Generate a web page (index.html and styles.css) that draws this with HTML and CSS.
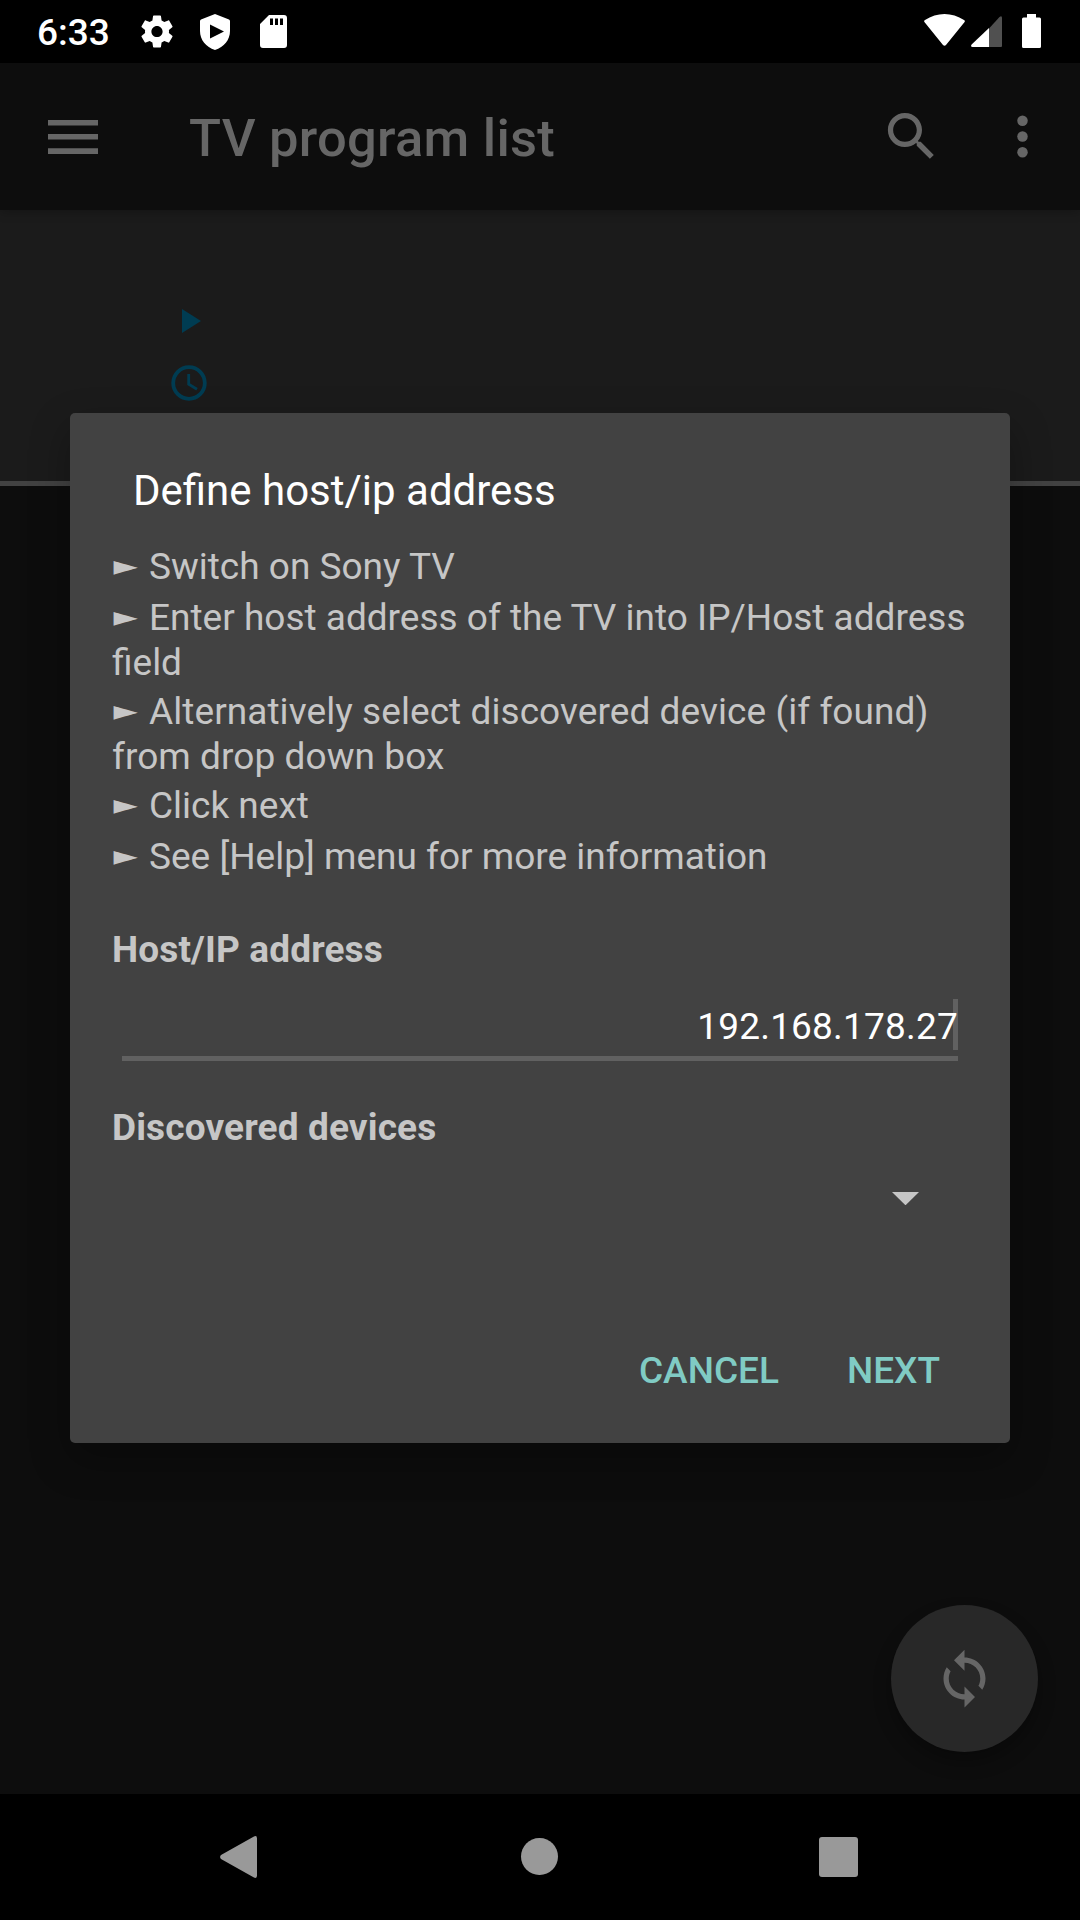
FILE: index.html
```html
<!DOCTYPE html>
<html lang="en">
<head>
<meta charset="utf-8">
<title>TV program list</title>
<link rel="stylesheet" href="styles.css">
</head>
<body>
<div class="screen">
  <header class="status">
    <span class="time">6:33</span>
    <svg class="gear" viewBox="2 2 20 20"><path d="M19.43 12.98c.04-.32.07-.64.07-.98s-.03-.66-.07-.98l2.11-1.65c.19-.15.24-.42.12-.64l-2-3.46c-.12-.22-.39-.3-.61-.22l-2.49 1c-.52-.4-1.08-.73-1.69-.98l-.38-2.65C14.46 2.18 14.25 2 14 2h-4c-.25 0-.46.18-.49.42l-.38 2.65c-.61.25-1.17.59-1.69.98l-2.49-1c-.23-.09-.49 0-.61.22l-2 3.46c-.13.22-.07.49.12.64l2.11 1.65c-.04.32-.07.65-.07.98s.03.66.07.98l-2.11 1.65c-.19.15-.24.42-.12.64l2 3.46c.12.22.39.3.61.22l2.49-1c.52.4 1.08.73 1.69.98l.38 2.65c.03.24.24.42.49.42h4c.25 0 .46-.18.49-.42l.38-2.65c.61-.25 1.17-.59 1.69-.98l2.49 1c.23.09.49 0 .61-.22l2-3.46c.12-.22.07-.49-.12-.64l-2.11-1.65zM12 15.5c-1.93 0-3.5-1.57-3.5-3.5s1.57-3.5 3.5-3.5 3.5 1.57 3.5 3.5-1.57 3.5-3.5 3.5z"/></svg>
    <svg class="shield" viewBox="0 0 30 36"><path fill-rule="evenodd" d="M15 0L29 5.500Q30 6 30 7V17C30 26 24 33 15 36C6 33 0 26 0 17V7Q0 6 1 5.500ZM10 10.500V24.500L24 17.500Z"/></svg>
    <svg class="sd" viewBox="0 0 27 33"><path fill-rule="evenodd" d="M9 0H24Q27 0 27 3V30Q27 33 24 33H3Q0 33 0 30V9ZM10 3.500V10H13V3.500ZM15 3.500V10H18V3.500ZM20 3.500V10H23V3.500Z"/></svg>
    <span class="spacer"></span>
    <svg class="wifi" viewBox="0 0 41 32"><path d="M.6 8.200Q-.5 7 1 6C13-2 28-2 40 6Q41.500 7 40.400 8.200L22 31Q20.500 32.500 19 31Z"/></svg>
    <svg class="signal" viewBox="0 0 31 31"><path d="M18 31V12.400L28.500 1Q31-.8 31 2V30Q31 31 30 31Z" fill="#505050"/><path d="M18 31V12.100L.6 28.600Q-.8 31 1.500 31Z"/></svg>
    <svg class="battery" viewBox="0 0 19 34"><path d="M5 0H14V3.500H17.500Q19 3.500 19 5V32.500Q19 34 17.500 34H1.500Q0 34 0 32.500V5Q0 3.500 1.500 3.500H5Z"/></svg>
  </header>
  <div class="appbar">
    <svg class="menu" viewBox="0 0 50 34"><path d="M0 0H50V5.500H0ZM0 14H50V19.500H0ZM0 28.200H50V34H0Z"/></svg>
    <h1 class="heading">TV program list</h1>
    <svg class="search" viewBox="0 0 24 24"><path d="M15.500 14h-.79l-.28-.27C15.410 12.590 16 11.110 16 9.500 16 5.910 13.090 3 9.500 3S3 5.910 3 9.500 5.910 16 9.500 16c1.610 0 3.090-.59 4.230-1.570l.27.28v.79l5 4.990L20.490 19l-4.990-5zm-6 0C7.010 14 5 11.990 5 9.500S7.010 5 9.500 5 14 7.010 14 9.500 11.990 14 9.500 14z"/></svg>
    <svg class="more" viewBox="0 0 24 24"><circle cx="12" cy="6" r="2"/><circle cx="12" cy="12" r="2"/><circle cx="12" cy="18" r="2"/></svg>
  </div>
  <section class="program">
    <svg class="play" viewBox="0 0 19 24"><path d="M0 0L19 12L0 24Z"/></svg>
    <svg class="clock" viewBox="0 0 36 36"><circle cx="18" cy="18" r="15.800"/><path class="hands" d="M17.700 9V19.200L26 24.200"/></svg>
  </section>
  <main class="content">
    <button class="fab" aria-label="Refresh"><svg viewBox="0 0 24 24"><path d="M12 4V1L8 5l4 4V6c3.310 0 6 2.690 6 6 0 1.010-.25 1.970-.7 2.800l1.460 1.460C19.540 15.030 20 13.570 20 12c0-4.420-3.580-8-8-8zm0 14c-3.310 0-6-2.690-6-6 0-1.010.25-1.970.7-2.800L5.240 7.740C4.460 8.970 4 10.430 4 12c0 4.420 3.580 8 8 8v3l4-4-4-4v3z"/></svg></button>
  </main>
  <nav class="navbar">
    <svg class="back" viewBox="0 0 37 42"><path d="M33.500.8Q37-1.200 37 2.500V39.500Q37 43.200 33.500 41.200L1 23Q-.8 21 1 19Z"/></svg>
    <span class="home"></span>
    <span class="recent"></span>
  </nav>
  <div class="dialog" role="dialog">
    <h2 class="title">Define host/ip address</h2>
    <ul class="steps">
      <li class="step"><span class="pointer">►</span>Switch on Sony TV</li>
      <li class="step long"><span class="pointer">►</span>Enter host address of the TV into IP/Host address<br>field</li>
      <li class="step long loose"><span class="pointer">►</span>Alternatively select discovered device (if found)<br>from drop down box</li>
      <li class="step"><span class="pointer">►</span>Click next</li>
      <li class="step"><span class="pointer">►</span>See [Help] menu for more information</li>
    </ul>
    <div class="label">Host/IP address</div>
    <div class="field"><span class="value">192.168.178.27</span></div>
    <div class="label devices">Discovered devices</div>
    <div class="spinner"><svg viewBox="0 0 27 13"><path d="M0 0H27L13.500 13.300Z"/></svg></div>
    <div class="actions"><button class="action">CANCEL</button><button class="action">NEXT</button></div>
  </div>
</div>
</body>
</html>
```
FILE: styles.css
```css
* { box-sizing: border-box; margin: 0; padding: 0; }
body { background: #000; font-family: Roboto, "Liberation Sans", sans-serif; }
svg { display: block; flex: none; }
button { font: inherit; border: 0; background: none; }

.screen { position: relative; width: 1080px; height: 1920px; display: flex; flex-direction: column; overflow: hidden; background: #0d0d0d; }

.status { height: 63px; flex: none; display: flex; align-items: flex-start; padding: 14px 39px 0 37px; background: #000; color: #fff; fill: #fff; }
.time { width: 104px; font-size: 37px; font-weight: 500; line-height: 38px; white-space: nowrap; }
.gear { width: 32px; height: 33px; margin-top: 1px; }
.shield { width: 30px; height: 36px; margin-left: 27px; }
.sd { width: 27px; height: 33px; margin: 1px 0 0 30px; }
.spacer { flex: 1; }
.wifi { width: 41px; height: 32px; }
.signal { width: 31px; height: 31px; margin: 2px 0 0 6px; }
.battery { width: 19px; height: 34px; margin-left: 20px; }

.appbar { height: 147px; flex: none; display: flex; align-items: center; padding: 0 26px 0 48px; background: #0d0d0d; color: #666; fill: #666; box-shadow: 0 2px 10px rgba(0,0,0,.25); z-index: 1; }
.menu { width: 50px; height: 34px; }
.heading { flex: 1; margin: 2px 0 0 91px; font-size: 52.500px; font-weight: 500; line-height: 62px; letter-spacing: .25px; white-space: nowrap; }
.search { width: 63px; height: 63px; }
.more { width: 63px; height: 63px; margin-left: 48px; }

.program { height: 276px; flex: none; padding: 99px 0 0 171px; background: #1b1b1b; border-bottom: 5px solid #424242; fill: #003c52; }
.play { width: 19px; height: 24px; margin-left: 11px; }
.clock { width: 36px; height: 36px; margin-top: 32px; fill: none; stroke: #003c52; stroke-width: 3.800px; }
.hands { stroke-width: 2.800px; }

.content { flex: 1; display: flex; align-items: flex-end; justify-content: flex-end; padding: 0 42px 42px 0; }
.fab { width: 147px; height: 147px; border-radius: 50%; display: flex; align-items: center; justify-content: center; background: #282828; fill: #666; box-shadow: 0 10px 18px rgba(0,0,0,.3); }
.fab svg { width: 63px; height: 63px; }

.navbar { height: 126px; flex: none; display: flex; align-items: center; padding: 0 222px 0 220px; background: #000; fill: #999; }
.back { width: 37px; height: 42px; }
.home { width: 37px; height: 37px; margin: -1px 261px 0 264px; border-radius: 50%; background: #999; }
.recent { width: 40px; height: 40px; border-radius: 3px; background: #999; }

/* Modal dialog over the dimmed screen */
.dialog { position: absolute; left: 70px; top: 413px; width: 940px; height: 1030px; padding: 53px 42px 0; border-radius: 5px; background: #424242; color: #c6c6c6; font-size: 37px; line-height: 45px; box-shadow: 0 16px 40px rgba(0,0,0,.3); z-index: 2; }
.title { padding-left: 21px; color: #fff; font-size: 42px; font-weight: 400; line-height: 50px; }
.steps { margin-top: 28px; list-style: none; white-space: nowrap; }
.step { padding-bottom: 6px; }
.step.long { padding-bottom: 4px; }
.loose { letter-spacing: .07px; }
.pointer { display: inline-block; width: 37px; height: 45px; vertical-align: top; font-family: "DejaVu Sans", sans-serif; font-size: 36.750px; line-height: 45px; letter-spacing: 0; transform: translate(1.500px, -1px) scale(.86, .75); transform-origin: 0 50%; }
.label { margin-top: 42px; font-weight: 700; letter-spacing: .14px; }
.field { height: 68px; margin: 21px 10px 0; border-bottom: 5px solid #616161; text-align: right; color: #fff; }
.value { display: inline-block; height: 51px; padding-top: 5px; margin-top: 6px; letter-spacing: .2px; background: linear-gradient(#616161,#616161) right / 5px 100% no-repeat; }
.devices { margin-top: 44px; }
.spinner { display: flex; justify-content: flex-end; padding: 42px 49px 0 0; fill: #c6c6c6; }
.spinner svg { width: 27px; height: 13px; }
.actions { display: flex; justify-content: flex-end; gap: 68px; margin-top: 143px; padding-right: 28px; }
.action { color: #80cbc4; font-weight: 500; line-height: 45px; }
```
